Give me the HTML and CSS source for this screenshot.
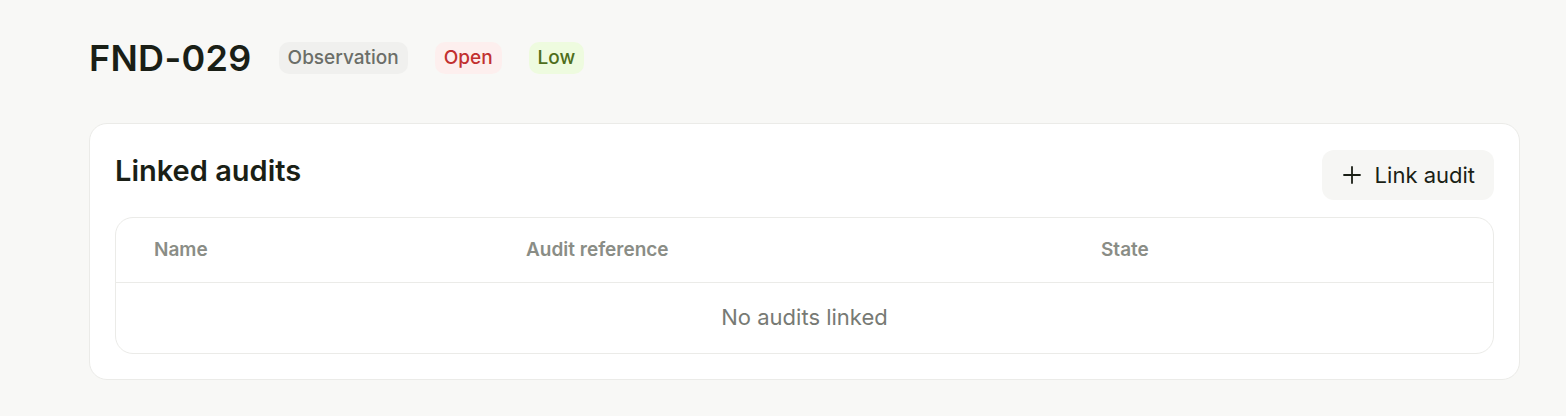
FILE: index.html
```html
<!DOCTYPE html>
<html lang="en">
<head>
    <meta charset="UTF-8">
    <meta name="viewport" content="width=device-width, initial-scale=1.0">
    <title>FND-029</title>
    <link rel="stylesheet" href="styles.css">
</head>
<body>

    <div class="page">
        <div class="finding-head">
            <h1>FND-029</h1>
            <span class="badge badge-type">Observation</span>
            <span class="badge badge-open">Open</span>
            <span class="badge badge-low">Low</span>
        </div>

        <div class="card">
            <div class="card-head">
                <h2>Linked audits</h2>
                <button class="link-button">
                    <svg width="20" height="20" viewBox="0 0 20 20" fill="none" stroke="currentColor" stroke-width="1.8" stroke-linecap="round">
                        <path d="M10 2v16M2 10h16"/>
                    </svg>
                    Link audit
                </button>
            </div>

            <div class="table">
                <div class="table-row table-header">
                    <div>Name</div>
                    <div>Audit reference</div>
                    <div>State</div>
                </div>
                <div class="table-empty">No audits linked</div>
            </div>
        </div>
    </div>

</body>
</html>
```

FILE: styles.css
```css
body {
    font-family: Inter, "Noto Sans", sans-serif;
    margin: 0;
    padding: 0;
    background-color: #f8f8f6;
    color: #1a1f16;
}

.page {
    padding: 34px 46px 0 89px;
}

/* Titel + badges */
.finding-head {
    display: flex;
    align-items: center;
    gap: 27px;
    height: 48px;
}

.finding-head h1 {
    margin: 0;
    font-size: 36px;
    font-weight: 600;
    letter-spacing: 0.3px;
}

.badge {
    display: inline-block;
    padding: 5px 9px;
    border-radius: 10px;
    font-size: 19px;
    font-weight: 500;
    line-height: 22px;
}

.badge-type {
    background-color: #f0f0ee;
    color: #6b6e68;
}

.badge-open {
    background-color: #fdefee;
    color: #c2302f;
}

.badge-low {
    background-color: #eefbdf;
    color: #4e6e1c;
}

.card {
    margin-top: 41px;
    background-color: white;
    border: 1px solid #ebebe8;
    border-radius: 18px;
    padding: 26px 25px 25px 25px;
}

.card-head {
    display: flex;
    justify-content: space-between;
    align-items: center;
    margin-bottom: 17px;
}

.card-head h2 {
    margin: -9px 0 0 0;
    font-size: 29px;
    font-weight: 600;
}

.link-button {
    display: flex;
    align-items: center;
    gap: 13px;
    height: 50px;
    padding: 0 19px 0 20px;
    background-color: #f6f6f4;
    color: #1a1f16;
    border: none;
    border-radius: 12px;
    font-family: inherit;
    font-size: 22px;
    cursor: pointer;
}

.table {
    border: 1px solid #ebebe8;
    border-radius: 18px;
}

.table-row {
    display: grid;
    grid-template-columns: 372px 575px 1fr;
}

.table-header {
    height: 65px;
    padding-bottom: 2px;
    box-sizing: border-box;
    align-items: center;
    border-bottom: 1px solid #ebebe8;
    color: #8a8d86;
    font-size: 19px;
    font-weight: 600;
}

.table-header div {
    padding-left: 38px;
}

.table-empty {
    height: 70px;
    line-height: 68px;
    padding-bottom: 2px;
    box-sizing: border-box;
    text-align: center;
    color: #777a74;
    font-size: 22px;
}
```
